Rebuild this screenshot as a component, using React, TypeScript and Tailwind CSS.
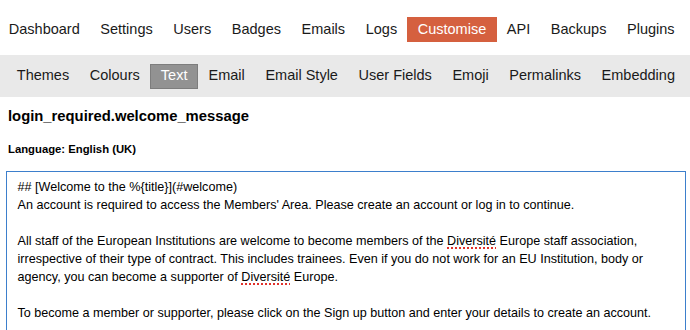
import React from 'react';

const mainTabs = ['Dashboard', 'Settings', 'Users', 'Badges', 'Emails', 'Logs', 'Customise', 'API', 'Backups', 'Plugins'];
const subTabs = ['Themes', 'Colours', 'Text', 'Email', 'Email Style', 'User Fields', 'Emoji', 'Permalinks', 'Embedding'];

function Spell({ children }: { children: React.ReactNode }) {
  // spellcheck squiggle under unknown words
  return (
    <span className="underline decoration-dotted decoration-[#e0312b] decoration-[1.5px] underline-offset-[3px]">
      {children}
    </span>
  );
}

export default function App() {
  return (
    <div className="w-[690px] h-[330px] overflow-hidden bg-white text-[#1a1a1a] font-['Liberation_Sans',Arial,sans-serif]">
      {/* admin nav */}
      <div className="flex pt-[17px] ml-[-1.5px] text-[14.5px]">
        {mainTabs.map((t) => (
          <div
            key={t}
            className={
              t === 'Customise'
                ? 'h-[25px] px-[10.3px] flex items-center bg-[#d5603f] text-white'
                : 'h-[25px] px-[10.3px] flex items-center'
            }
          >
            {t}
          </div>
        ))}
      </div>

      {/* customise sub nav */}
      <div className="mt-[13px] h-[42px] bg-[#e9e9e9] flex items-center pl-[6.5px] text-[14.5px]">
        {subTabs.map((t) => (
          <div
            key={t}
            className={
              t === 'Text'
                ? 'h-[25px] px-[9.8px] flex items-center bg-[#929292] border border-[#7d7d7d] text-white'
                : 'h-[25px] px-[10.3px] flex items-center'
            }
          >
            {t}
          </div>
        ))}
      </div>

      <div className="px-[8px] text-black">
        <h2 className="mt-[9px] text-[14.8px] leading-[20px] font-bold">login_required.welcome_message</h2>
        <div className="mt-[14.5px] text-[11.3px] leading-[16px] font-bold">Language: English (UK)</div>
      </div>

      {/* editor */}
      <div className="mt-[14px] ml-[6px] w-[680px] h-[200px] border-[1.5px] border-[#3d7fcc] pl-[10.5px] pt-[6px] text-[12.6px] leading-[18px] text-black whitespace-nowrap">
        <div>## [Welcome to the %{'{'}title{'}'}](#welcome)</div>
        <div>An account is required to access the Members' Area. Please create an account or log in to continue.</div>
        <div className="h-[18px]" />
        <div>
          All staff of the European Institutions are welcome to become members of the <Spell>Diversité</Spell> Europe staff association,
        </div>
        <div>irrespective of their type of contract. This includes trainees. Even if you do not work for an EU Institution, body or</div>
        <div>
          agency, you can become a supporter of <Spell>Diversité</Spell> Europe.
        </div>
        <div className="h-[18px]" />
        <div>To become a member or supporter, please click on the Sign up button and enter your details to create an account.</div>
      </div>
    </div>
  );
}
